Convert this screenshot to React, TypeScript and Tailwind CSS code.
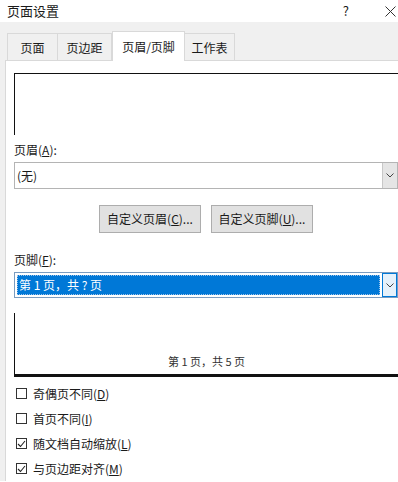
import React from 'react';

const font = { fontFamily: '"Noto Sans CJK SC", "Noto Sans", sans-serif' };

const tabs = [
  { label: '页面', width: 'w-[51px]' },
  { label: '页边距', width: 'w-[54px]' },
  { label: '页眉/页脚', width: 'w-[73px]', active: true },
  { label: '工作表', width: 'w-[50px]' },
];

const options = [
  { label: '奇偶页不同', key: 'D', checked: false },
  { label: '首页不同', key: 'I', checked: false },
  { label: '随文档自动缩放', key: 'L', checked: true },
  { label: '与页边距对齐', key: 'M', checked: true },
];

function Chevron() {
  return (
    <svg width="8" height="5" viewBox="0 0 8 5" fill="none">
      <path d="M0.5 0.5 L4 4 L7.5 0.5" stroke="#444" strokeWidth="1" />
    </svg>
  );
}

function Label({ text, k }: { text: string; k: string }) {
  return (
    <div className="h-[16px] text-[12px] leading-[16px] text-[#1a1a1a]">
      {text}(<span className="underline">{k}</span>):
    </div>
  );
}

function Checkbox({ checked }: { checked: boolean }) {
  return (
    <div className="flex h-[11px] w-[11px] items-center justify-center border border-[#333] bg-white">
      {checked && (
        <svg width="9" height="8" viewBox="0 0 9 8" fill="none">
          <path d="M1 4 L3.5 6.5 L8 1" stroke="#222" strokeWidth="1.1" />
        </svg>
      )}
    </div>
  );
}

export default function App() {
  return (
    <div className="h-[482px] w-[398px] overflow-hidden bg-white text-[#1a1a1a]" style={font}>
      {/* Title bar */}
      <div className="flex h-[22px] items-center bg-white">
        <div className="pl-[7px] text-[13px] leading-[16px]">页面设置</div>
        <div className="ml-auto flex items-center">
          <span className="text-[13px] leading-[16px]">?</span>
          <svg className="ml-[36px] mr-[2px]" width="11" height="11" viewBox="0 0 11 11" fill="none">
            <path d="M0.5 0.5 L10.5 10.5 M10.5 0.5 L0.5 10.5" stroke="#333" strokeWidth="1" />
          </svg>
        </div>
      </div>

      {/* Tabs */}
      <div className="flex h-[38px] items-end bg-[#f0f0f0] pl-[7px]">
        {tabs.map((t) =>
          t.active ? (
            <div
              key={t.label}
              className={`${t.width} relative -mb-px flex h-[30px] items-center justify-center border border-b-0 border-[#d9d9d9] bg-white text-[12px]`}
            >
              {t.label}
            </div>
          ) : (
            <div
              key={t.label}
              className={`${t.width} flex h-[27px] items-center justify-center border border-b-0 border-l-0 border-[#d9d9d9] bg-[#f0f0f0] pt-[2px] text-[12px] first:border-l`}
            >
              {t.label}
            </div>
          ),
        )}
      </div>

      {/* Panel */}
      <div className="flex">
        <div className="w-[5px] bg-[#f0f0f0]" />
        <div className="flex-1 border-t border-l border-[#d9d9d9] bg-white pl-[8px]">
          {/* header preview */}
          <div className="mt-[12px] h-[62px] border-t border-l border-[#111]" />

          <div className="mt-[7px]">
            <Label text="页眉" k="A" />
          </div>
          <div className="mt-[4px] flex h-[27px] border border-[#b4b4b4] bg-white">
            <div className="flex flex-1 items-center pl-[2px] text-[12px]">(无)</div>
            <div className="flex w-[15px] items-center justify-center border-l border-[#c8c8c8] bg-[#e5e5e5]">
              <Chevron />
            </div>
          </div>

          {/* buttons */}
          <div className="mt-[16px] flex gap-[10px] pl-[85px]">
            <div className="flex h-[28px] w-[102px] items-center justify-center border border-[#adadad] bg-[#e1e1e1] text-[12px]">
              自定义页眉(<span className="underline">C</span>)...
            </div>
            <div className="flex h-[28px] w-[102px] items-center justify-center border border-[#adadad] bg-[#e1e1e1] text-[12px]">
              自定义页脚(<span className="underline">U</span>)...
            </div>
          </div>

          <div className="mt-[19px]">
            <Label text="页脚" k="F" />
          </div>
          <div className="mt-[4px] flex h-[26px] border border-[#7a9cc0] bg-white">
            <div className="flex flex-1 items-center p-[2px]">
              <div className="flex h-full w-full items-center border border-dotted border-[#9cc3ea] bg-[#0078d7] pl-[1px] text-[12px] text-white">
                第 1 页，共 ? 页
              </div>
            </div>
            <div className="flex w-[15px] items-center justify-center border border-[#0078d7] bg-[#e5f1fb]">
              <Chevron />
            </div>
          </div>

          {/* footer preview */}
          <div className="mt-[15px] flex h-[64px] items-end justify-center border-b-[3px] border-l border-[#111] pb-[6px]">
            <span className="text-[11px] leading-[14px] text-[#333]">第 1 页，共 5 页</span>
          </div>

          <div className="mt-[4px]">
            {options.map((o) => (
              <div key={o.label} className="flex h-[25px] items-center gap-[6px] pl-[2px]">
                <Checkbox checked={o.checked} />
                <span className="text-[12px] leading-[16px]">
                  {o.label}(<span className="underline">{o.key}</span>)
                </span>
              </div>
            ))}
          </div>
        </div>
      </div>
    </div>
  );
}
